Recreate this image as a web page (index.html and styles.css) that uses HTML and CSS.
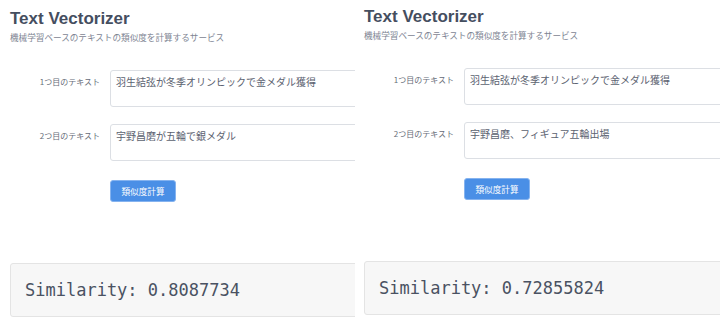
FILE: index.html
```html
<!DOCTYPE html>
<html lang="ja">
<head>
    <meta charset="UTF-8">
    <meta name="viewport" content="width=device-width, initial-scale=1.0">
    <title>Text Vectorizer</title>
    <link rel="stylesheet" href="styles.css">
</head>
<body>

<div class="screens">
    <!-- Screen 1 -->
    <div class="screen">
        <h1 class="title">Text Vectorizer</h1>
        <p class="subtitle">機械学習ベースのテキストの類似度を計算するサービス</p>
        <div class="form">
            <label class="form-label">1つ目のテキスト</label>
            <textarea class="text-input">羽生結弦が冬季オリンピックで金メダル獲得</textarea>
            <label class="form-label">2つ目のテキスト</label>
            <textarea class="text-input">宇野昌磨が五輪で銀メダル</textarea>
        </div>
        <button class="calc-button">類似度計算</button>
        <div class="result">Similarity: 0.8087734</div>
    </div>

    <!-- Screen 2 -->
    <div class="screen screen-second">
        <h1 class="title">Text Vectorizer</h1>
        <p class="subtitle">機械学習ベースのテキストの類似度を計算するサービス</p>
        <div class="form">
            <label class="form-label">1つ目のテキスト</label>
            <textarea class="text-input">羽生結弦が冬季オリンピックで金メダル獲得</textarea>
            <label class="form-label">2つ目のテキスト</label>
            <textarea class="text-input">宇野昌磨、フィギュア五輪出場</textarea>
        </div>
        <button class="calc-button">類似度計算</button>
        <div class="result">Similarity: 0.72855824</div>
    </div>
</div>

</body>
</html>
```

FILE: styles.css
```css
/* Global Styles */
body {
    margin: 0;
    padding: 0;
    background-color: #fff;
    font-family: "Liberation Sans", "Noto Sans CJK JP", sans-serif;
    color: #454e5f;
    overflow: hidden;
}
.screens {
    display: flex;
    height: 331px;
}
.screen {
    width: 345px;
    padding: 9px 0 0 10px;
    overflow: hidden;
    flex-shrink: 0;
}
.screen-second {
    width: auto;
    flex: 1;
    padding-top: 7px;
    padding-left: 9px;
}
/* Header */
.title {
    margin: 0;
    font-size: 17px;
    line-height: 20px;
    font-weight: bold;
    color: #454e5f;
}
.subtitle {
    margin: 2px 0 0;
    font-family: "Noto Sans CJK JP", sans-serif;
    font-size: 8.6px;
    line-height: 12px;
    color: #7d8492;
}
/* Form */
.form {
    display: grid;
    grid-template-columns: 90px 300px;
    column-gap: 10px;
    row-gap: 17px;
    margin-top: 27px;
}
.form-label {
    font-family: "Noto Sans CJK JP", sans-serif;
    font-size: 8px;
    line-height: 14px;
    padding-top: 5px;
    text-align: right;
    color: #666c78;
}
.text-input {
    box-sizing: border-box;
    height: 37px;
    padding: 4px 5px;
    border: 1px solid #dcdfe4;
    border-radius: 3px;
    font-family: "Noto Sans CJK JP", sans-serif;
    font-size: 10px;
    line-height: 14px;
    color: #5b6270;
    resize: none;
    outline: none;
}
.calc-button {
    display: block;
    width: 66px;
    height: 22px;
    margin: 19px 0 0 100px;
    padding: 0;
    border: 1px solid #85b3ef;
    border-radius: 3px;
    background-color: #4a8fe6;
    color: #fff;
    font-family: "Noto Sans CJK JP", sans-serif;
    font-size: 8.6px;
    cursor: pointer;
}
/* Result */
.result {
    box-sizing: border-box;
    width: 380px;
    height: 54px;
    margin-top: 61px;
    padding-left: 14px;
    border: 1px solid #e4e4e4;
    border-radius: 3px;
    background-color: #f7f7f7;
    font-family: "DejaVu Sans Mono", monospace;
    font-size: 17px;
    line-height: 52px;
    color: #4a5262;
}
```
